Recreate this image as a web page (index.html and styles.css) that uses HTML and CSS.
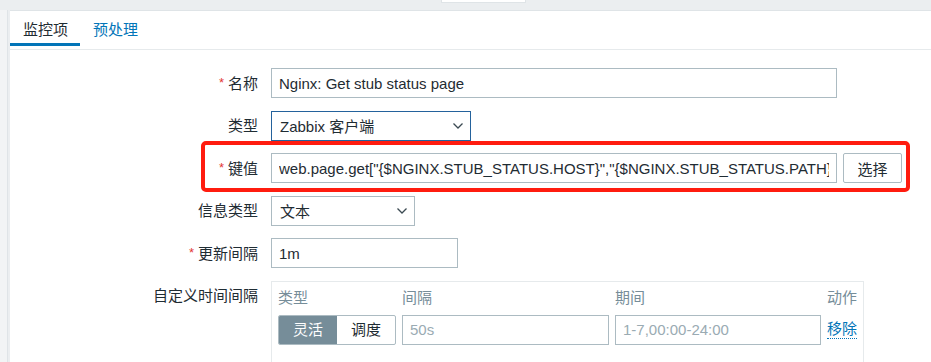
FILE: index.html
```html
<!DOCTYPE html>
<html lang="zh-CN">

<head>
    <meta charset="UTF-8">
    <meta name="viewport" content="width=device-width, initial-scale=1.0">
    <title>监控项</title>

    <link rel="stylesheet" href="styles.css">
</head>

<body>

    <div class="topbar">
        <span class="top-btn"></span>
    </div>

    <div class="page">
        <div class="side"></div>

        <div class="panel">
            <ul class="tabs">
                <li class="active">监控项</li>
                <li><a href="#">预处理</a></li>
            </ul>

            <form class="form">
                <div class="row">
                    <label class="req" for="name">名称</label>
                    <div class="field">
                        <input class="text w-wide" type="text" id="name" value="Nginx: Get stub status page">
                    </div>
                </div>

                <div class="row">
                    <label>类型</label>
                    <div class="field">
                        <div class="select focus w-type">
                            <span>Zabbix 客户端</span>
                            <svg width="10" height="6" viewBox="0 0 10 6"><polyline points="0.5,0.5 5,5 9.5,0.5" fill="none" stroke="#3b4a52" stroke-width="1.3"/></svg>
                        </div>
                    </div>
                </div>

                <div class="row marked">
                    <label class="req" for="key">键值</label>
                    <div class="field">
                        <input class="text w-wide" type="text" id="key" value="web.page.get[&quot;{$NGINX.STUB_STATUS.HOST}&quot;,&quot;{$NGINX.STUB_STATUS.PATH}&quot;,&quot;{$NGINX.STUB_STATUS.PORT}&quot;]">
                        <button type="button" class="btn">选择</button>
                    </div>
                </div>

                <div class="row">
                    <label>信息类型</label>
                    <div class="field">
                        <div class="select w-info">
                            <span>文本</span>
                            <svg width="10" height="6" viewBox="0 0 10 6"><polyline points="0.5,0.5 5,5 9.5,0.5" fill="none" stroke="#3b4a52" stroke-width="1.3"/></svg>
                        </div>
                    </div>
                </div>

                <div class="row">
                    <label class="req" for="delay">更新间隔</label>
                    <div class="field">
                        <input class="text w-delay" type="text" id="delay" value="1m">
                    </div>
                </div>

                <div class="row">
                    <label>自定义时间间隔</label>
                    <div class="field">
                        <div class="intervals">
                            <span class="head">类型</span>
                            <span class="head">间隔</span>
                            <span class="head">期间</span>
                            <span class="head">动作</span>

                            <div class="segment">
                                <span class="on">灵活</span>
                                <span>调度</span>
                            </div>
                            <input class="text" type="text" placeholder="50s">
                            <input class="text" type="text" placeholder="1-7,00:00-24:00">
                            <a href="#" class="link">移除</a>
                        </div>
                    </div>
                </div>
            </form>
        </div>
    </div>

</body>

</html>
```

FILE: styles.css
```css
body {
    margin: 0;
    background-color: #ebeef0;
    font-family: "Liberation Sans", "Noto Sans CJK SC", sans-serif;
    font-size: 15px;
    color: #1f2c33;
    overflow: hidden;
}

.topbar {
    height: 10px;
}

.top-btn {
    display: block;
    width: 83px;
    height: 2px;
    margin-left: 441px;
    background-color: #fff;
    border: 1px solid #dfe4e7;
    border-top: none;
}

.page {
    display: flex;
    height: 352px;
}

.side {
    width: 8px;
    margin-right: 2px;
    background-color: #f2f4f5;
    border-right: 1px solid #dfe4e7;
    box-sizing: border-box;
}

.panel {
    flex: 1;
    background-color: #fff;
    border-top: 1px solid #dfe4e7;
}

/* tabs */
.tabs {
    display: flex;
    height: 38px;
    margin: 0;
    padding: 0;
    list-style: none;
    border-bottom: 1px solid #e6eaec;
}

.tabs li {
    height: 35px;
    padding: 3px 12px 0 13px;
    line-height: 32px;
    border-bottom: 3px solid transparent;
    box-sizing: border-box;
}

.tabs li.active {
    border-bottom-color: #0275b8;
}

.tabs a {
    color: #0275b8;
    text-decoration: none;
}

/* form */
.form {
    display: flex;
    flex-direction: column;
    gap: 12.6px;
    padding-top: 18px;
}

.row {
    display: grid;
    grid-template-columns: 248px 1fr;
    column-gap: 13px;
    position: relative;
}

.row > label {
    height: 30px;
    text-align: right;
    line-height: 30px;
}

.req::before {
    content: "*";
    color: #e33734;
    margin-right: 4px;
    font-size: 13px;
    vertical-align: 2px;
}

/* red annotation frame */
.marked::after {
    content: "";
    position: absolute;
    top: -12px;
    bottom: -9px;
    left: 191px;
    right: 21px;
    border: 4px solid #ff1c0f;
    border-radius: 5px;
    pointer-events: none;
}

.field {
    display: flex;
    gap: 6px;
    align-items: flex-start;
    height: 30px;
}

input.text {
    height: 30px;
    padding: 0 7px;
    border: 1px solid #acbbc2;
    box-sizing: border-box;
    font-family: inherit;
    font-size: 15px;
    color: #1f2c33;
    background-color: #fff;
    outline: none;
}

input.text::placeholder {
    color: #9aabb3;
}

.w-wide {
    width: 566px;
}

.w-delay {
    width: 187px;
}

.select {
    display: flex;
    align-items: center;
    justify-content: space-between;
    height: 30px;
    padding: 0 7px 0 8px;
    border: 1px solid #acbbc2;
    box-sizing: border-box;
    background-color: #fff;
}

.select.focus {
    border-color: #24629c;
}

.w-type {
    width: 200px;
}

.w-info {
    width: 144px;
}

.btn {
    width: 59px;
    height: 30px;
    border: 1px solid #acbbc2;
    border-radius: 2px;
    background-color: #fff;
    font-family: inherit;
    font-size: 15px;
    color: #1f2c33;
    padding: 0;
}

/* custom intervals */
.intervals {
    display: grid;
    grid-template-columns: 118px 207px 206px auto;
    grid-template-rows: 20px 30px;
    column-gap: 6px;
    row-gap: 7px;
    width: 593px;
    height: 90px;
    padding: 6px 6px 0;
    border: 1px solid #e6eaec;
    box-sizing: border-box;
}

.row:last-child .field {
    height: auto;
}

.head {
    height: 20px;
    line-height: 20px;
    color: #768d99;
}

.segment {
    display: flex;
    height: 30px;
    border: 1px solid #acbbc2;
    border-radius: 2px;
    box-sizing: border-box;
    overflow: hidden;
}

.segment span {
    flex: 1;
    height: 28px;
    text-align: center;
    line-height: 28px;
}

.segment .on {
    background-color: #768d99;
    color: #fff;
}

.link {
    align-self: center;
    color: #0275b8;
    text-decoration: none;
    border-bottom: 1px dotted #0275b8;
    line-height: 18px;
    justify-self: start;
}
```
